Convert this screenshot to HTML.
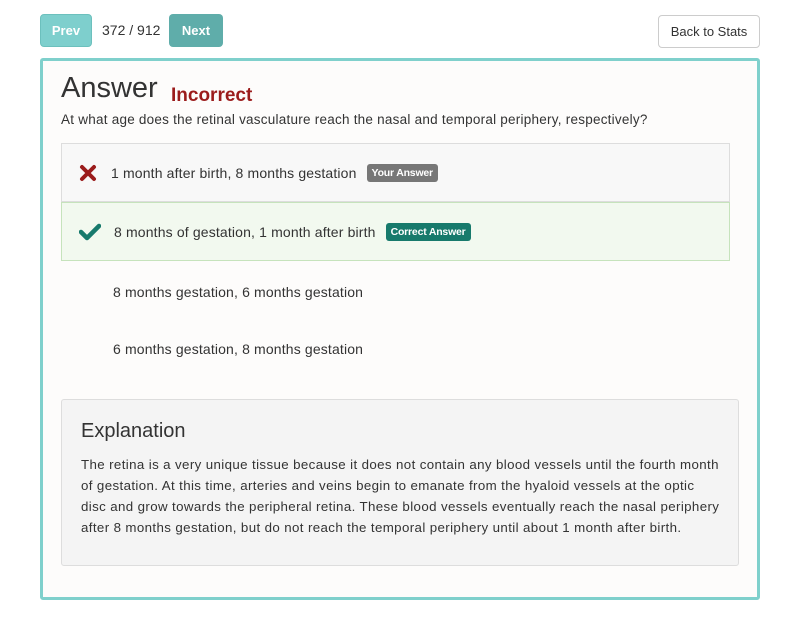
<!DOCTYPE html>
<html><head><style>
body{margin:0;width:800px;height:624px;background:#fff;font-family:"Liberation Sans",sans-serif;color:#333;position:relative;overflow:hidden}
.a{position:absolute}
.btn{position:absolute;border-radius:4px;font-size:13px;display:flex;align-items:center;justify-content:center;box-sizing:border-box}
.panel{position:absolute;left:40px;top:58px;width:720px;height:542px;border:3px solid #7fd0cc;box-sizing:border-box;border-radius:3px;background:#fdfcfb}
.row{position:absolute;left:61px;width:669px;box-sizing:border-box;font-size:14px;display:flex;align-items:center;letter-spacing:0.15px}
.lbl{display:inline-block;color:#fff;font-size:10.5px;font-weight:bold;padding:3px 5px;border-radius:3px;margin-left:10px;letter-spacing:-0.2px}
</style></head><body>
<div class="btn" style="left:40px;top:14px;width:52px;height:33px;background:#7ecfcd;color:#fff;font-weight:bold;border:1px solid #6cc0bd">Prev</div>
<div class="a" style="left:102px;top:22px;font-size:14px;color:#333">372 / 912</div>
<div class="btn" style="left:169px;top:14px;width:54px;height:33px;background:#5fadaa;color:#fff;font-weight:bold">Next</div>
<div class="btn" style="left:658px;top:15px;width:102px;height:33px;background:#fff;border:1px solid #ccc;color:#333">Back to Stats</div>
<div class="panel"></div>
<div class="a" style="left:61px;top:72px;font-size:29px;color:#333">Answer</div>
<div class="a" style="left:171px;top:85px;font-size:19px;font-weight:bold;color:#9b1c1c">Incorrect</div>
<div class="a" style="left:61px;top:112px;font-size:13.5px;color:#333;letter-spacing:0.24px">At what age does the retinal vasculature reach the nasal and temporal periphery, respectively?</div>
<div class="row" style="top:143px;height:59px;background:#f8f8f8;border:1px solid #ddd;padding-left:17px">
<svg width="18" height="18" viewBox="0 0 18 18"><path d="M3 3L15 15M15 3L3 15" stroke="#9b1c1c" stroke-width="4" stroke-linecap="round"/></svg>
<span style="margin-left:14px">1 month after birth, 8 months gestation</span><span class="lbl" style="background:#777">Your Answer</span></div>
<div class="row" style="top:202px;height:59px;background:#f2f9ef;border:1px solid #c6e3bc;padding-left:17px">
<svg width="22" height="18" viewBox="0 0 22 18"><path d="M2 9L8 15L20 3" stroke="#177a6c" stroke-width="4.5" fill="none" stroke-linecap="round" stroke-linejoin="round"/></svg>
<span style="margin-left:13px">8 months of gestation, 1 month after birth</span><span class="lbl" style="background:#177a6c">Correct Answer</span></div>
<div class="a" style="left:113px;top:284px;font-size:14px;letter-spacing:0.15px">8 months gestation, 6 months gestation</div>
<div class="a" style="left:113px;top:341px;font-size:14px;letter-spacing:0.15px">6 months gestation, 8 months gestation</div>
<div class="a" style="left:61px;top:399px;width:678px;height:167px;background:#f4f4f4;border:1px solid #ddd;box-sizing:border-box;border-radius:3px"></div>
<div class="a" style="left:81px;top:420px;font-size:20px;color:#333">Explanation</div>
<div class="a" style="left:81px;top:454px;white-space:nowrap;font-size:13.3px;line-height:21px;color:#333;letter-spacing:0.38px">The retina is a very unique tissue because it does not contain any blood vessels until the fourth month<br>of gestation. At this time, arteries and veins begin to emanate from the hyaloid vessels at the optic<br>disc and grow towards the peripheral retina. These blood vessels eventually reach the nasal periphery<br>after 8 months gestation, but do not reach the temporal periphery until about 1 month after birth.</div>
</body></html>
